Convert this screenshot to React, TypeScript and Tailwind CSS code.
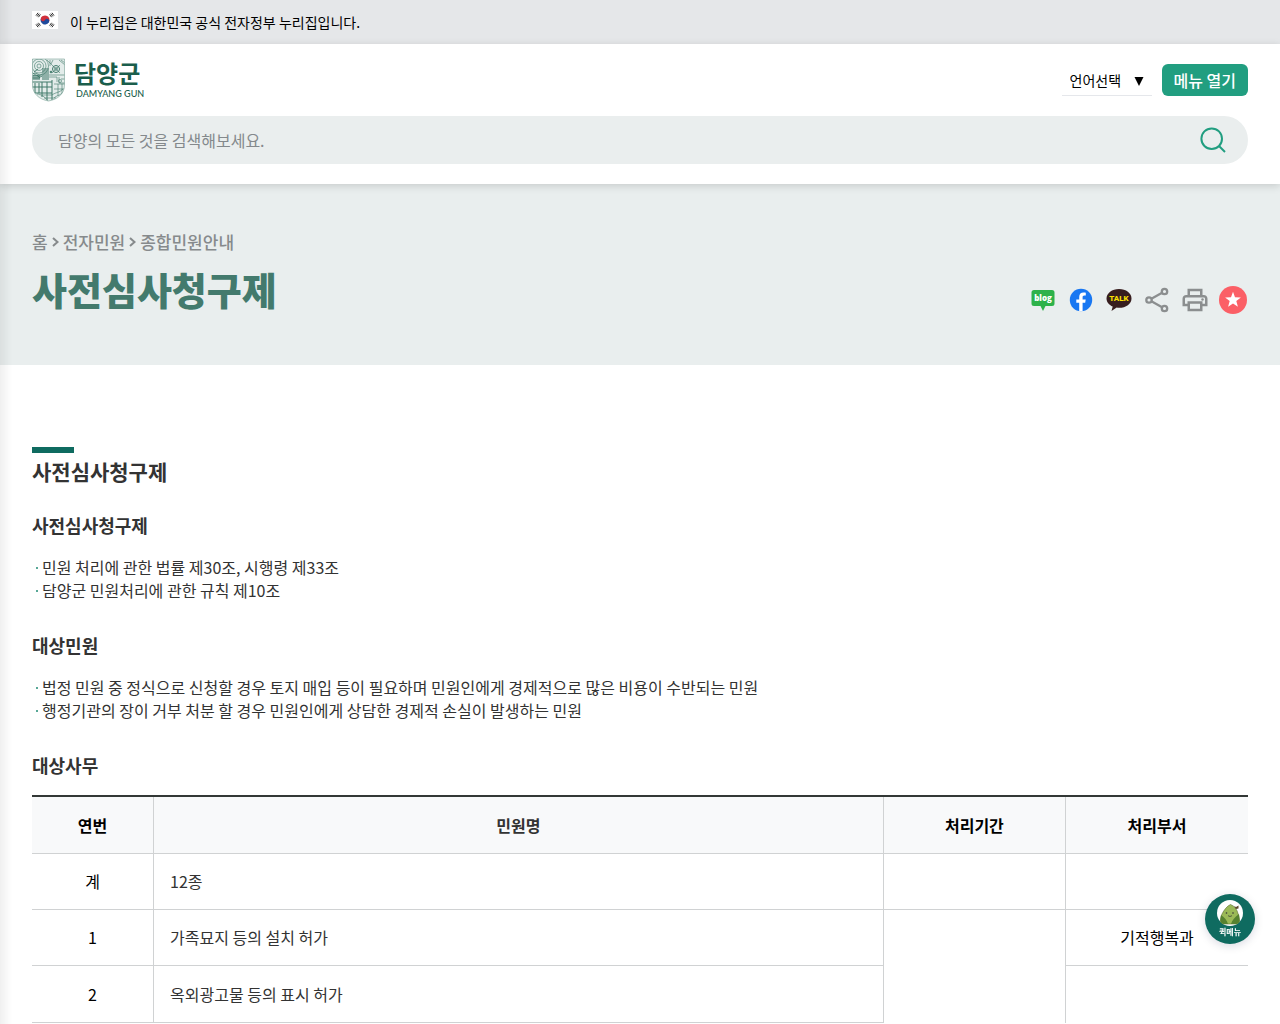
import { useState } from 'react';
import type { ReactNode } from 'react';
import { MdOutlinePrint } from 'react-icons/md';

const sections = [
  {
    title: '사전심사청구제',
    items: ['민원 처리에 관한 법률 제30조, 시행령 제33조', '담양군 민원처리에 관한 규칙 제10조'],
  },
  {
    title: '대상민원',
    items: [
      '법정 민원 중 정식으로 신청할 경우 토지 매입 등이 필요하며 민원인에게 경제적으로 많은 비용이 수반되는 민원',
      '행정기관의 장이 거부 처분 할 경우 민원인에게 상담한 경제적 손실이 발생하는 민원',
    ],
  },
];

const breadcrumbs = ['홈', '전자민원', '종합민원안내'];

function FlagIcon() {
  return (
    <svg width="26" height="18" viewBox="0 0 26 18" className="mb-1" aria-hidden="true">
      <rect width="26" height="18" fill="#fff" />
      <g transform="rotate(28 13 9)">
        <path d="M8.500 9a4.500 4.500 0 0 1 9 0z" fill="#d0303c" />
        <path d="M8.500 9a4.500 4.500 0 0 0 9 0z" fill="#1f4a9c" />
        <circle cx="10.750" cy="9" r="2.250" fill="#d0303c" />
        <circle cx="15.250" cy="9" r="2.250" fill="#1f4a9c" />
      </g>
      <g stroke="#333" strokeWidth="1">
        <path d="M4 4.600l2-2.800M5.200 5.400l2-2.800M6.400 6.200l2-2.800" />
        <path d="M22 4.600l-2-2.800M20.800 5.400l-2-2.800M19.600 6.200l-2-2.800" />
        <path d="M4 13.400l2 2.800M5.200 12.600l2 2.800M6.400 11.800l2 2.800" />
        <path d="M22 13.400l-2 2.800M20.800 12.600l-2 2.800M19.600 11.800l-2 2.800" />
      </g>
    </svg>
  );
}

function ShieldIcon() {
  return (
    <svg width="33" height="44" viewBox="0 0 33 44" fill="none" stroke="#3f7869" strokeWidth="0.6" aria-hidden="true">
      <clipPath id="shield">
        <path d="M0.500 1h32v26c0 9-7 14.500-16 16-9-1.500-16-7-16-16z" />
      </clipPath>
      <g clipPath="url(#shield)">
        <rect width="33" height="44" fill="#e3ecea" stroke="none" />
        <path d="M10 10h7v12h-7zM0 17h8v5H0z" fill="#8fb0a8" stroke="none" />
        <circle cx="7" cy="8" r="2" />
        <circle cx="7" cy="8" r="4.500" />
        <circle cx="7" cy="8" r="7" />
        <circle cx="7" cy="8" r="9.500" />
        <circle cx="24" cy="11" r="1.500" />
        <circle cx="24" cy="11" r="3.500" strokeWidth="1" />
        <path d="M20 7l8 8M28 7l-8 8M15 2l5 5M18 2v6M21 2l-2 4M27 2l6 5M29 2l4 3M17 17h16M17 19h8v5M27 19v6h6M29 21h4" />
        <path d="M1 16c3-3 6 3 9 0M1 18c3-3 6 3 9 0M2 14l4-3M0 20h8l-3-3" strokeWidth="0.900" />
        <path d="M0 24h20M3 25v10M7 25v10M10 24v15M15 24v18M20 22v20M0 29h20M0 35h20" strokeWidth="1" />
        <path d="M22 26h11M22 31h11M26 26v12M30 26v10M10 37h10M12 40h12" />
        <path d="M20 37c4-3 7-2 11-6M22 40c3-3 6-2 9-6M5 36c4 0 8 3 11 7" />
        <circle cx="19" cy="14" r="1" fill="#3a7769" />
        <circle cx="28" cy="23" r="1.500" />
      </g>
      <path d="M0.500 1h32v26c0 9-7 14.500-16 16-9-1.500-16-7-16-16z" stroke="#7ba397" />
    </svg>
  );
}

function BlogIcon() {
  return (
    <svg width="30" height="30" viewBox="0 0 30 30">
      <path d="M6 5h18a2.500 2.500 0 0 1 2.500 2.500v11A2.500 2.500 0 0 1 24 21h-6.500L15 26 12.500 21H6a2.500 2.500 0 0 1-2.500-2.500v-11A2.500 2.500 0 0 1 6 5z" fill="#2db24a" />
      <text x="15" y="15.500" textAnchor="middle" fontSize="8" fontWeight="800" fill="#fff" className="font-['Open_Sans',sans-serif]">blog</text>
    </svg>
  );
}

function FacebookIcon() {
  return (
    <svg width="30" height="30" viewBox="0 0 30 30">
      <circle cx="15" cy="15" r="11.200" fill="#1877f2" />
      <path d="M13.200 26.200v-8.400h-2.900v-3.300h2.900V12c0-2.900 1.700-4.400 4.300-4.400 1.200 0 2.300.2 2.300.2v2.700h-1.400c-1.400 0-1.800.9-1.800 1.700v2.300h3.100l-.5 3.300h-2.600v8.400z" fill="#fff" />
    </svg>
  );
}

function TalkIcon() {
  return (
    <svg width="30" height="30" viewBox="0 0 30 30">
      <path d="M15 4c7 0 12.500 4.200 12.500 9.400S22 22.800 15 22.800c-.8 0-1.600 0-2.300-.2L7.500 26l1.200-4.500C5 19.800 2.500 16.900 2.500 13.400 2.500 8.200 8 4 15 4z" fill="#371d1e" />
      <text x="15" y="16" textAnchor="middle" fontSize="8" fontWeight="800" fill="#fae100" className="font-['Roboto',sans-serif]">TALK</text>
    </svg>
  );
}

function ShareIcon() {
  return (
    <svg width="30" height="30" viewBox="0 0 30 30" fill="none" stroke="#8b8e8f" strokeWidth="2.300">
      <circle cx="7" cy="15" r="2.700" />
      <circle cx="22.500" cy="6.500" r="2.700" />
      <circle cx="22.500" cy="23.500" r="2.700" />
      <path d="M9.400 13.700l10.700-5.900M9.400 16.300l10.700 5.900" />
    </svg>
  );
}

function StarIcon() {
  return (
    <svg width="30" height="30" viewBox="0 0 30 30">
      <circle cx="15" cy="15" r="14" fill="#fb5f66" />
      <path d="M15 6.800l2 5.500 5.900.2-4.600 3.600 1.600 5.700-4.900-3.300-4.900 3.300 1.600-5.700-4.600-3.600 5.900-.2z" fill="#fff" />
    </svg>
  );
}

function SearchIcon() {
  return (
    <svg width="28" height="28" viewBox="0 0 28 28" fill="none" stroke="#219e80" strokeWidth="2">
      <circle cx="12.700" cy="12.700" r="10.300" />
      <path d="M20 20l6 6" />
    </svg>
  );
}

function MascotIcon() {
  return (
    <svg width="26" height="26" viewBox="0 0 26 26" aria-hidden="true">
      <clipPath id="mascot">
        <circle cx="13" cy="13" r="13" />
      </clipPath>
      <circle cx="13" cy="13" r="13" fill="#fff" />
      <g clipPath="url(#mascot)">
        <path d="M4 24c-1-3-.5-7 1-10 2-4 5-8 8.500-9.500 4 1.500 6.500 5 7.500 9 1 3 2 7 1 10.500z" fill="#9bb957" stroke="#5a6f33" strokeWidth="0.600" />
        <path d="M3 24l1-9c3 2 6 5 7 9zM23 24l-1-10c-4 3-7 6-8 10z" fill="#56812f" />
        <path d="M17 6l2 1 2.500-1.500v3l-2.500.5z" fill="#5c4a2c" />
        <circle cx="9.500" cy="13" r="0.800" fill="#333" />
        <circle cx="16" cy="13" r="0.800" fill="#333" />
        <path d="M11 15.500c1 1.200 3 1.200 4 0" stroke="#333" strokeWidth="0.700" fill="none" />
      </g>
    </svg>
  );
}

const shareLinks: { label: string; icon: ReactNode }[] = [
  { label: '네이버 블로그', icon: <BlogIcon /> },
  { label: '페이스북', icon: <FacebookIcon /> },
  { label: '카카오톡', icon: <TalkIcon /> },
  { label: '공유하기', icon: <ShareIcon /> },
  { label: '인쇄', icon: <MdOutlinePrint size={30} color="#8b8e8f" /> },
  { label: '즐겨찾기', icon: <StarIcon /> },
];

function Header() {
  const [keyword, setKeyword] = useState('');

  return (
    <header className="relative z-10 bg-white px-8 pt-3.5 pb-5 shadow-[0_2px_8px_rgba(0,0,0,0.15)]">
      <div className="flex items-center justify-between">
        <a href="#" className="flex items-center gap-[9px] text-[#1b5e4c]">
          <ShieldIcon />
          <span className="flex flex-col">
            <span className="text-2xl leading-7 font-bold">담양군</span>
            <span className="pl-0.5 font-['Lato',sans-serif] text-[9px] leading-[14px] font-medium">DAMYANG GUN</span>
          </span>
        </a>
        <div className="flex items-center gap-2.5">
          <div className="relative border-b border-gray-200">
            <select aria-label="언어선택" className="h-[30px] w-[90px] appearance-none bg-transparent pl-2 text-sm text-black">
              <option>언어선택</option>
            </select>
            <svg width="10" height="9" viewBox="0 0 10 9" className="pointer-events-none absolute top-3 right-2" aria-hidden="true">
              <path d="M0.500 0h9L5 9z" fill="#000" />
            </svg>
          </div>
          <button type="button" className="h-8 rounded-md bg-[#219e80] px-3 text-base font-medium text-white">
            메뉴 열기
          </button>
        </div>
      </div>
      <form className="mt-3.5 flex h-12 items-center rounded-full bg-[#eaeeee] pr-[21px] pl-[26px]" onSubmit={(e) => e.preventDefault()}>
        <input
          type="text"
          aria-label="검색어"
          value={keyword}
          onChange={(e) => setKeyword(e.target.value)}
          placeholder="담양의 모든 것을 검색해보세요."
          className="min-w-0 flex-1 bg-transparent text-base text-black outline-none placeholder:text-[#84898c]"
        />
        <button type="submit" aria-label="검색">
          <SearchIcon />
        </button>
      </form>
    </header>
  );
}

function PageBanner() {
  return (
    <div className="flex items-end justify-between bg-[#e9eeee] px-8 pt-[46px] pb-[50px]">
      <div>
        <nav className="flex items-center gap-1 text-[17px] leading-6 font-medium text-[#868a8c]">
          {breadcrumbs.map((name, i) => (
            <span key={name} className="flex items-center gap-1">
              {i > 0 && (
                <svg width="7" height="10" viewBox="0 0 7 10" fill="none" stroke="currentColor" strokeWidth="2" aria-hidden="true">
                  <path d="M1 1l4.500 4L1 9" />
                </svg>
              )}
              <a href="#">{name}</a>
            </span>
          ))}
        </nav>
        <h1 className="mt-2 text-[38px] leading-[53px] font-black text-[#437a6d]">사전심사청구제</h1>
      </div>
      <div className="flex gap-2">
        {shareLinks.map((link) => (
          <a key={link.label} href="#" aria-label={link.label}>
            {link.icon}
          </a>
        ))}
      </div>
    </div>
  );
}

function TaskTable() {
  return (
    <table className="mt-4 w-full table-fixed border-collapse border-t-2 border-[#333836] text-base text-black">
      <colgroup>
        <col className="w-[10%]" />
        <col className="w-[60%]" />
        <col className="w-[15%]" />
        <col className="w-[15%]" />
      </colgroup>
      <thead>
        <tr className="bg-[#f8f9fa]">
          <th className="border-r border-b border-[#d0d2d3] py-4 font-bold">연번</th>
          <th className="border-r border-b border-[#d0d2d3] py-4 font-bold text-[#333]">민원명</th>
          <th className="border-r border-b border-[#d0d2d3] py-4 font-bold">처리기간</th>
          <th className="border-b border-[#d0d2d3] py-4 font-bold">처리부서</th>
        </tr>
      </thead>
      <tbody className="leading-[23px]">
        <tr>
          <td className="border-r border-b border-[#d0d2d3] py-4 text-center">계</td>
          <td className="border-r border-b border-[#d0d2d3] px-4 py-4 text-[#333]">12종</td>
          <td className="border-r border-b border-[#d0d2d3]" />
          <td className="border-b border-[#d0d2d3]" />
        </tr>
        <tr>
          <td className="border-r border-b border-[#d0d2d3] py-4 text-center">1</td>
          <td className="border-r border-b border-[#d0d2d3] px-4 py-4 text-[#333]">가족묘지 등의 설치 허가</td>
          <td rowSpan={2} className="border-r border-[#d0d2d3]" />
          <td className="border-b border-[#d0d2d3] py-4 text-center">기적행복과</td>
        </tr>
        <tr className="leading-6">
          <td className="border-r border-b border-[#d0d2d3] py-4 text-center">2</td>
          <td className="border-r border-b border-[#d0d2d3] px-4 py-4 text-[#333]">옥외광고물 등의 표시 허가</td>
          <td />
        </tr>
      </tbody>
    </table>
  );
}

export default function App() {
  return (
    <div className="relative min-h-screen bg-white font-['Noto_Sans_CJK_KR',sans-serif]">
      <div className="flex h-11 items-center gap-3 bg-[#e5e7e9] px-8 text-sm text-black">
        <FlagIcon />
        <span>이 누리집은 대한민국 공식 전자정부 누리집입니다.</span>
      </div>
      <Header />
      <PageBanner />

      <main className="px-8 pt-[82px]">
        <div className="h-1.5 w-[42px] bg-[#0f6b60]" />
        <h2 className="mt-[3px] text-[21px] leading-[30px] font-bold text-[#333]">사전심사청구제</h2>
        <div className="mt-[25px]">
          {sections.map((section) => (
            <section key={section.title} className="mb-[29px]">
              <h3 className="text-lg leading-[28px] font-bold text-[#333]">{section.title}</h3>
              <ul className="mt-[17px] text-base leading-[23px] text-[#333]">
                {section.items.map((item) => (
                  <li key={item} className="flex items-center gap-1 pl-1">
                    <span className="size-0.5 shrink-0 bg-[#58a897]" />
                    {item}
                  </li>
                ))}
              </ul>
            </section>
          ))}
          <h3 className="text-lg leading-[28px] font-bold text-[#333]">대상사무</h3>
          <TaskTable />
        </div>
      </main>

      <div className="pointer-events-none fixed inset-y-0 left-0 z-20 w-3 bg-linear-to-r from-black/6 to-transparent" />

      <button
        type="button"
        className="fixed right-[25px] bottom-20 z-20 flex size-[50px] flex-col items-center justify-center rounded-full bg-[#0f6b60] text-[8px] leading-3 font-bold text-white shadow-[0_2px_10px_rgba(0,0,60,0.15)]"
      >
        <MascotIcon />
        퀵메뉴
      </button>
    </div>
  );
}
